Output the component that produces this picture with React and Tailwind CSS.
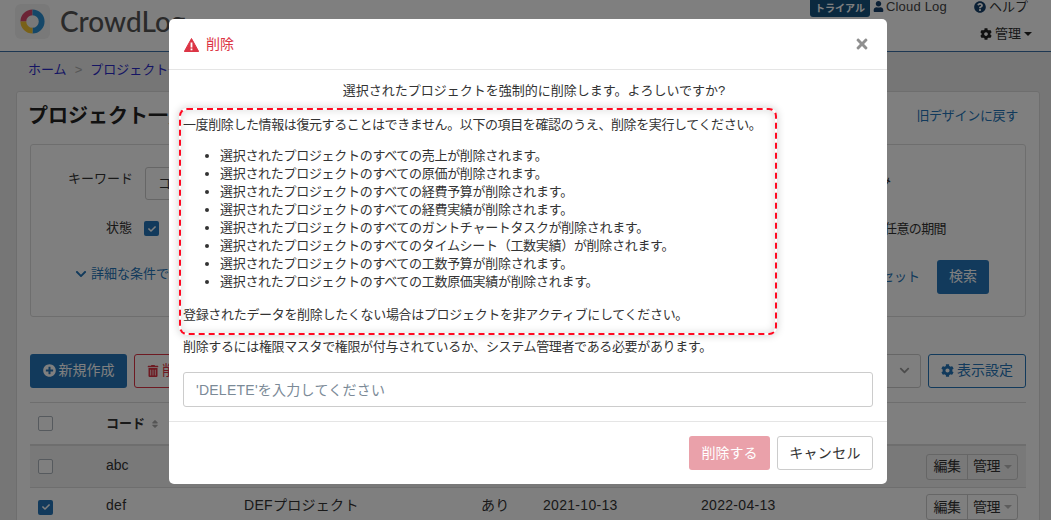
import { FaCheck, FaChevronDown, FaCog, FaPlusCircle, FaQuestionCircle, FaSort, FaTimes, FaTrashAlt, FaUser } from 'react-icons/fa';

const FONT = "font-['Liberation_Sans','Noto_Sans_CJK_JP',sans-serif]";

const deleteItems = [
  '選択されたプロジェクトのすべての売上が削除されます。',
  '選択されたプロジェクトのすべての原価が削除されます。',
  '選択されたプロジェクトのすべての経費予算が削除されます。',
  '選択されたプロジェクトのすべての経費実績が削除されます。',
  '選択されたプロジェクトのすべてのガントチャートタスクが削除されます。',
  '選択されたプロジェクトのすべてのタイムシート（工数実績）が削除されます。',
  '選択されたプロジェクトのすべての工数予算が削除されます。',
  '選択されたプロジェクトのすべての工数原価実績が削除されます。',
];

function Logo() {
  return (
    <div className="flex h-[35px] w-[35px] items-center justify-center rounded-[6px] bg-[#f2f2f2]">
      <svg width="27" height="27" viewBox="0 0 28 28" fill="none" strokeWidth="6">
        <path d="M4.5 14A9.5 9.5 0 0 1 14 4.5" stroke="#d9476b" />
        <path d="M14 4.5A9.5 9.5 0 0 1 14 23.5" stroke="#2a8fd0" />
        <path d="M14 23.5A9.5 9.5 0 0 1 4.5 14" stroke="#f2c230" />
      </svg>
    </div>
  );
}

function WarningIcon() {
  return (
    <svg width="15" height="14" viewBox="0 0 15 14">
      <path d="M7.5 0.5 14.7 13.5H0.3Z" fill="#dc3545" stroke="#dc3545" strokeLinejoin="round" />
      <rect x="6.6" y="4.5" width="1.8" height="5" fill="#fff" />
      <rect x="6.6" y="10.5" width="1.8" height="1.8" fill="#fff" />
    </svg>
  );
}

function Checkbox({ checked }) {
  if (checked) {
    return (
      <span className="flex h-[15px] w-[15px] items-center justify-center rounded-[2px] bg-[#2475b8]">
        <FaCheck size={8} className="text-white" />
      </span>
    );
  }
  return <span className="block h-[15px] w-[15px] rounded-[2px] border border-[#adb5bd] bg-white" />;
}

function RowActions() {
  return (
    <div className="flex h-[26px] w-[92px] items-center rounded-[3px] border border-[#ccc] text-[14px] tracking-[-0.5px] text-[#333]">
      <span className="flex h-full w-[41px] items-center justify-center border-r border-[#ccc]">編集</span>
      <span className="flex flex-1 items-center justify-center gap-1">
        管理
        <span className="h-0 w-0 border-x-[4px] border-t-[4px] border-x-transparent border-t-[#bbb]" />
      </span>
    </div>
  );
}

function Page() {
  return (
    <div className="h-[520px] overflow-hidden bg-[#ececec] text-[#333]">
      <header className="flex h-[52px] justify-between border-b border-[#3b6ea5] bg-white pl-[15px] pr-[23px]">
        <div className="flex items-start gap-[10px] pt-[4px]">
          <Logo />
          <span className="pt-[3px] font-['Lato',sans-serif] text-[28px] font-medium leading-none text-[#555]">CrowdLog</span>
        </div>
        <div className="flex flex-col items-end">
          <div className="flex h-[17px] items-start">
            <span className="mr-[3px] flex h-[17px] items-center rounded-b-[3px] bg-[#14527f] px-[5px] text-[10px] font-bold text-white">トライアル</span>
            <FaUser size={11} className="mr-[2px] mt-[1px] text-[#17406b]" />
            <span className="mr-[27px] mt-[-3px] text-[13px] tracking-[0.2px] text-[#444]">Cloud Log</span>
            <FaQuestionCircle size={12} className="mr-[3px] mt-[1px] text-[#17406b]" />
            <span className="mt-[-3px] text-[13px]">ヘルプ</span>
          </div>
          <div className="mr-[-4px] mt-[7px] flex items-center gap-[3px] text-[13px]">
            <FaCog size={12} className="text-[#222]" />
            管理
            <span className="h-0 w-0 border-x-[4px] border-t-[4px] border-x-transparent border-t-[#222]" />
          </div>
        </div>
      </header>

      <nav className="flex h-[39px] items-center gap-[8px] pb-[3px] pl-[28px] text-[13px] text-[#2a2ac8]">
        <span>ホーム</span>
        <span className="text-[#aaa]">&gt;</span>
        <span>プロジェクト一覧</span>
      </nav>

      <main className="ml-[16px] mr-[11px] rounded-[3px] border border-[#ddd] bg-white px-[13px] pt-[10px]">
        <div className="flex h-[42px] items-start justify-between">
          <h1 className="ml-[-2px] text-[20px] font-bold leading-[28px] text-[#222]">プロジェクト一覧</h1>
          <a className="mr-[8px] mt-[4px] text-[13px] tracking-[-0.3px] text-[#2475b8]">旧デザインに戻す</a>
        </div>

        <section className="h-[173px] rounded-[3px] border border-[#ddd] px-[37px] pt-[22px]">
          <div className="flex items-start justify-between text-[13px]">
            <div className="flex items-start gap-[12px]">
              <span className="pt-[2px]">キーワード</span>
              <span className="h-[33px] w-[200px] rounded-[3px] border border-[#ccc] pl-[12px] leading-[31px]">コード</span>
            </div>
            <span className="mr-[97px] pt-[3px]">のみ</span>
          </div>
          <div className="mt-[19px] flex items-center justify-between pl-[38px] text-[13px]">
            <div className="flex items-center gap-[12px]">
              <span className="mt-[-3px]">状態</span>
              <Checkbox checked />
              <span>アクティブ</span>
            </div>
            <span className="mr-[42px] tracking-[-0.6px]">任意の期間</span>
          </div>
          <div className="mt-[21px] flex items-center justify-between text-[13px] text-[#2475b8]">
            <span className="ml-[7px] mt-[-5px] flex items-center gap-[4px]">
              <FaChevronDown size={12} />
              詳細な条件で検索
            </span>
            <div className="flex items-center gap-[17px]">
              <span>リセット</span>
              <span className="mr-[-1px] flex h-[34px] w-[52px] items-center justify-center rounded-[3px] bg-[#2475b8] text-[14px] text-white">検索</span>
            </div>
          </div>
        </section>

        <div className="mt-[36px] flex h-[35px] items-center justify-between">
          <div className="flex gap-[7px] text-[14px]">
            <span className="flex h-[34px] w-[97px] items-center justify-center gap-[3px] rounded-[3px] bg-[#2475b8] text-white">
              <FaPlusCircle size={13} />
              新規作成
            </span>
            <span className="flex h-[34px] w-[97px] items-center gap-[3px] rounded-[3px] border border-[#dc3545] pl-[12px] text-[#dc3545]">
              <FaTrashAlt size={12} />
              削除
            </span>
          </div>
          <div className="flex gap-[7px] text-[14px]">
            <span className="flex h-[34px] w-[60px] items-center justify-end rounded-[3px] border border-[#ccc] pr-[10px] text-[#999]">
              <FaChevronDown size={11} />
            </span>
            <span className="flex h-[34px] w-[98px] items-center justify-center gap-[3px] rounded-[3px] border border-[#2475b8] text-[#2475b8]">
              <FaCog size={13} />
              表示設定
            </span>
          </div>
        </div>

        <div className="mt-[14px] border-t border-[#ddd] text-[14px]">
          <div className="flex h-[41px] items-center pl-[8px]">
            <Checkbox />
            <span className="ml-[53px] text-[13px] font-bold">コード</span>
            <FaSort size={10} className="ml-[5px] text-[#aaa]" />
          </div>
          <div className="flex h-[44px] items-center justify-between border-b border-t-[2px] border-[#ddd] bg-[#f2f2f2] px-[8px]">
            <div className="flex items-center">
              <Checkbox />
              <span className="ml-[53px] mt-[-3px]">abc</span>
            </div>
            <RowActions />
          </div>
          <div className="flex h-[38px] items-center justify-between px-[8px]">
            <div className="flex items-center">
              <Checkbox checked />
              <div className="ml-[53px] mt-[-4px] flex items-center tracking-[0.3px]">
                <span className="w-[138px]">def</span>
                <span className="w-[237px]">DEFプロジェクト</span>
                <span className="w-[62px]">あり</span>
                <span className="w-[158px]">2021-10-13</span>
                <span>2022-04-13</span>
              </div>
            </div>
            <RowActions />
          </div>
        </div>
      </main>
    </div>
  );
}

function DeleteModal() {
  return (
    <div className="absolute left-[169px] top-[19px] flex h-[465px] w-[718px] flex-col rounded-[5px] bg-white text-[13px] text-[#333]">
      <div className="flex h-[51px] items-center justify-between border-b border-[#e5e5e5] pl-[15px] pr-[17px]">
        <div className="flex items-center gap-[7px] pt-[1px] text-[#dc3545]">
          <WarningIcon />
          <span className="mt-[-1px] text-[14px]">削除</span>
        </div>
        <FaTimes size={16} className="text-[#8f8f8f]" />
      </div>

      <div className="relative h-[351px] px-[14px]">
        <p className="mt-[12px] pl-[12px] text-center text-[13px] leading-[18px]">選択されたプロジェクトを強制的に削除します。よろしいですか?</p>

        <p className="mt-[16px] text-[13px] leading-[18px] tracking-[-0.4px]">一度削除した情報は復元することはできません。以下の項目を確認のうえ、削除を実行してください。</p>
        <ul className="ml-[37px] mt-[13px] list-disc text-[13px] leading-[18px] tracking-[-0.3px]">
          {deleteItems.map((item) => (
            <li key={item}>{item}</li>
          ))}
        </ul>
        <p className="mt-[15px] text-[13px] leading-[18px] tracking-[-0.32px]">登録されたデータを削除したくない場合はプロジェクトを非アクティブにしてください。</p>
        <p className="mt-[14px] text-[13px] leading-[18px] tracking-[-0.35px]">削除するには権限マスタで権限が付与されているか、システム管理者である必要があります。</p>
        <input
          readOnly
          placeholder="'DELETE'を入力してください"
          className="mt-[16px] h-[35px] w-full rounded-[3px] border border-[#ccc] px-[12px] text-[14px] tracking-[0.25px] placeholder:text-[#7b8a97]"
        />

        {/* annotation drawn over the screenshot */}
        <div className="absolute left-[10px] top-[38px] h-[227px] w-[598px] rounded-[8px] border-2 border-dashed border-[#ff0a22] shadow-[0_0_8px_rgba(0,0,0,0.2),inset_0_0_8px_rgba(0,0,0,0.15)]" />
      </div>

      <div className="flex flex-1 items-start justify-end gap-[7px] border-t border-[#e5e5e5] pr-[14px] pt-[14px]">
        <span className="flex h-[34px] w-[81px] items-center justify-center rounded-[3px] bg-[#eaa1aa] text-[14px] text-white">削除する</span>
        <span className="flex h-[34px] w-[96px] items-center justify-center rounded-[3px] border border-[#ccc] text-[14px] tracking-[0.3px]">キャンセル</span>
      </div>
    </div>
  );
}

export default function App() {
  return (
    <div className={`relative h-[520px] overflow-hidden ${FONT}`}>
      <Page />
      <div className="absolute inset-0 bg-black/50" />
      <DeleteModal />
    </div>
  );
}
